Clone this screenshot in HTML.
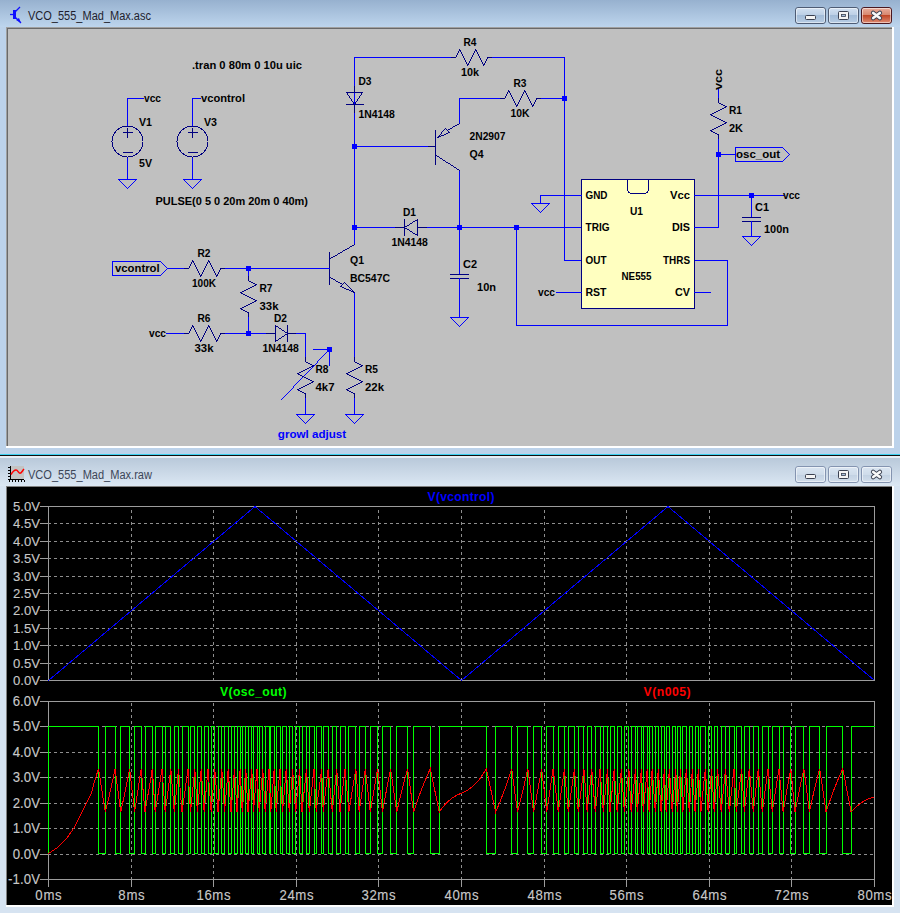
<!DOCTYPE html><html><head><meta charset="utf-8"><style>html,body{margin:0;padding:0;width:900px;height:913px;overflow:hidden;background:#bcd2ea;font-family:"Liberation Sans",sans-serif}</style></head><body><svg width="900" height="913" viewBox="0 0 900 913" style="position:absolute;left:0;top:0" font-family="Liberation Sans, sans-serif">
<defs>
<linearGradient id="tb1" x1="0" y1="0" x2="0" y2="1"><stop offset="0" stop-color="#97b1cf"/><stop offset="1" stop-color="#bdd5ed"/></linearGradient>
<linearGradient id="tb2" x1="0" y1="0" x2="0" y2="1"><stop offset="0" stop-color="#b9c9da"/><stop offset="1" stop-color="#dbe7f3"/></linearGradient>
<linearGradient id="btn1" x1="0" y1="0" x2="0" y2="1"><stop offset="0" stop-color="#d4e2f2"/><stop offset="0.45" stop-color="#bdd0e6"/><stop offset="0.5" stop-color="#a3bcd8"/><stop offset="1" stop-color="#b8cde4"/></linearGradient>
<linearGradient id="btnc" x1="0" y1="0" x2="0" y2="1"><stop offset="0" stop-color="#eab0a0"/><stop offset="0.45" stop-color="#d88870"/><stop offset="0.5" stop-color="#c04828"/><stop offset="1" stop-color="#e09078"/></linearGradient>
<linearGradient id="btn2" x1="0" y1="0" x2="0" y2="1"><stop offset="0" stop-color="#dbe6f2"/><stop offset="0.5" stop-color="#cfdcea"/><stop offset="0.55" stop-color="#c3d2e3"/><stop offset="1" stop-color="#d3dfec"/></linearGradient>
</defs>
<rect x="0" y="0" width="900" height="456" fill="#bcd2ea"/>
<rect x="0" y="0" width="900" height="27" fill="url(#tb1)"/>
<rect x="6" y="27" width="888" height="421" fill="#ffffff"/>
<rect x="6" y="27" width="886" height="419" fill="#a0a0a0"/>
<rect x="7" y="28" width="885" height="418" fill="#696969"/>
<rect x="8" y="29" width="884" height="417" fill="#c0c0c0"/>
<rect x="0" y="454" width="900" height="1" fill="#3cd0f0"/>
<rect x="0" y="455" width="900" height="1" fill="#101010"/>
<rect x="0" y="456" width="900" height="457" fill="#d6e3f1"/>
<rect x="0" y="456" width="900" height="2" fill="#e8eef6"/>
<rect x="0" y="458" width="900" height="28" fill="url(#tb2)"/>
<rect x="6" y="486" width="888" height="421" fill="#ffffff"/>
<rect x="6" y="486" width="886" height="419" fill="#808080"/>
<rect x="7" y="487" width="885" height="418" fill="#000000"/>
<g stroke="#1010ff" fill="none" stroke-width="1.3"><line x1="10" y1="14.5" x2="14" y2="14.5"/><line x1="20" y1="7" x2="15" y2="12"/><line x1="15" y1="17" x2="21" y2="23"/></g>
<rect x="13" y="10" width="3" height="9" fill="#1010ff"/>
<polygon points="21,23 16,20 19,18" fill="#1010ff"/>
<text x="28" y="20" font-size="12.5" font-weight="normal" fill="#1e1e2e" text-anchor="start" textLength="123" lengthAdjust="spacingAndGlyphs" >VCO_555_Mad_Max.asc</text>
<rect x="11" y="466" width="13" height="13" fill="#c4c4c4"/>
<g shape-rendering="crispEdges"><rect x="10" y="466" width="1" height="14" fill="#000"/><rect x="9" y="479" width="15" height="1" fill="#000"/><rect x="8" y="467" width="2" height="1" fill="#000"/><rect x="8" y="470" width="2" height="1" fill="#000"/><rect x="8" y="473" width="2" height="1" fill="#000"/><rect x="8" y="476" width="2" height="1" fill="#000"/><rect x="8" y="479" width="2" height="1" fill="#000"/><rect x="9" y="480" width="1" height="2" fill="#000"/><rect x="12" y="480" width="1" height="2" fill="#000"/><rect x="15" y="480" width="1" height="2" fill="#000"/><rect x="18" y="480" width="1" height="2" fill="#000"/><rect x="21" y="480" width="1" height="2" fill="#000"/><rect x="24" y="480" width="1" height="2" fill="#000"/></g>
<path d="M11 474.5 C12.5 472 14 470 16 470 C18 470 18.5 473.3 20 473.3 C21.5 473.3 22.5 470.5 24 469" stroke="#ff0000" fill="none" stroke-width="1.5"/>
<text x="28" y="479" font-size="12.5" font-weight="normal" fill="#3c4658" text-anchor="start" textLength="124" lengthAdjust="spacingAndGlyphs" >VCO_555_Mad_Max.raw</text>
<rect x="795.5" y="7.5" width="30" height="16" rx="2.5" fill="url(#btn1)" stroke="#4e5c74"/>
<rect x="796.5" y="8.5" width="28" height="14" rx="1.5" fill="none" stroke="rgba(255,255,255,0.5)"/>
<rect x="805.5" y="15.5" width="10" height="4" rx="1" fill="#f4f4f4" stroke="#3a4050"/>
<rect x="828.5" y="7.5" width="30" height="16" rx="2.5" fill="url(#btn1)" stroke="#4e5c74"/>
<rect x="829.5" y="8.5" width="28" height="14" rx="1.5" fill="none" stroke="rgba(255,255,255,0.5)"/>
<rect x="838.5" y="11.5" width="10" height="8" rx="1" fill="#f4f4f4" stroke="#3a4050"/><rect x="841.5" y="14.5" width="4" height="2" fill="#a8c0dc" stroke="#3a4050" stroke-width="0.8"/>
<rect x="861.5" y="7.5" width="30" height="16" rx="2.5" fill="url(#btnc)" stroke="#4a1820"/>
<rect x="862.5" y="8.5" width="28" height="14" rx="1.5" fill="none" stroke="rgba(255,255,255,0.5)"/>
<path d="M873.2 13.0 L879.8 18.0 M879.8 13.0 L873.2 18.0" stroke="#3a4050" stroke-width="4.6" stroke-linecap="round"/><path d="M873.2 13.0 L879.8 18.0 M879.8 13.0 L873.2 18.0" stroke="#f8f8f8" stroke-width="2.8" stroke-linecap="round"/>
<rect x="795.5" y="466.5" width="30" height="16" rx="2.5" fill="url(#btn2)" stroke="#8494b0"/>
<rect x="796.5" y="467.5" width="28" height="14" rx="1.5" fill="none" stroke="rgba(255,255,255,0.5)"/>
<rect x="805.5" y="474.5" width="10" height="4" rx="1" fill="#f4f4f4" stroke="#3a4050"/>
<rect x="828.5" y="466.5" width="30" height="16" rx="2.5" fill="url(#btn2)" stroke="#8494b0"/>
<rect x="829.5" y="467.5" width="28" height="14" rx="1.5" fill="none" stroke="rgba(255,255,255,0.5)"/>
<rect x="838.5" y="470.5" width="10" height="8" rx="1" fill="#f4f4f4" stroke="#3a4050"/><rect x="841.5" y="473.5" width="4" height="2" fill="#a8c0dc" stroke="#3a4050" stroke-width="0.8"/>
<rect x="861.5" y="466.5" width="30" height="16" rx="2.5" fill="url(#btn2)" stroke="#8494b0"/>
<rect x="862.5" y="467.5" width="28" height="14" rx="1.5" fill="none" stroke="rgba(255,255,255,0.5)"/>
<path d="M873.2 472.0 L879.8 477.0 M879.8 472.0 L873.2 477.0" stroke="#3a4050" stroke-width="4.6" stroke-linecap="round"/><path d="M873.2 472.0 L879.8 477.0 M879.8 472.0 L873.2 477.0" stroke="#f8f8f8" stroke-width="2.8" stroke-linecap="round"/>
<g font-family="Liberation Sans, sans-serif" shape-rendering="crispEdges" stroke-linecap="square">
<polyline points="143.50,98.50 127.50,98.50 127.50,126.50" fill="none" stroke="#0000ff" shape-rendering="crispEdges"/>
<polyline points="127.50,157.50 127.50,179.50" fill="none" stroke="#0000ff" shape-rendering="crispEdges"/>
<circle cx="127.5" cy="141.5" r="15.5" fill="none" stroke="#000080"/>
<line x1="123" y1="132.5" x2="132" y2="132.5" stroke="#000080" />
<line x1="127.5" y1="128" x2="127.5" y2="137" stroke="#000080" />
<line x1="123" y1="152.5" x2="132" y2="152.5" stroke="#000080" />
<text x="144" y="102" font-size="11" font-weight="bold" fill="#000" text-anchor="start" textLength="17" lengthAdjust="spacingAndGlyphs" >vcc</text>
<text x="139" y="126" font-size="11" font-weight="bold" fill="#000" text-anchor="start" textLength="13" lengthAdjust="spacingAndGlyphs" >V1</text>
<text x="139" y="167" font-size="11" font-weight="bold" fill="#000" text-anchor="start" textLength="13" lengthAdjust="spacingAndGlyphs" >5V</text>
<polyline points="200.50,98.50 192.50,98.50 192.50,126.50" fill="none" stroke="#0000ff" shape-rendering="crispEdges"/>
<polyline points="192.50,157.50 192.50,179.50" fill="none" stroke="#0000ff" shape-rendering="crispEdges"/>
<circle cx="192.5" cy="141.5" r="15.5" fill="none" stroke="#000080"/>
<line x1="188" y1="132.5" x2="197" y2="132.5" stroke="#000080" />
<line x1="192.5" y1="128" x2="192.5" y2="137" stroke="#000080" />
<line x1="188" y1="152.5" x2="197" y2="152.5" stroke="#000080" />
<text x="201" y="102" font-size="11" font-weight="bold" fill="#000" text-anchor="start" textLength="44" lengthAdjust="spacingAndGlyphs" >vcontrol</text>
<text x="204" y="126" font-size="11" font-weight="bold" fill="#000" text-anchor="start" textLength="13" lengthAdjust="spacingAndGlyphs" >V3</text>
<text x="155.5" y="205" font-size="11" font-weight="bold" fill="#000" text-anchor="start" textLength="152.5" lengthAdjust="spacingAndGlyphs" >PULSE(0 5 0 20m 20m 0 40m)</text>
<text x="192" y="69" font-size="11" font-weight="bold" fill="#000" text-anchor="start" textLength="110" lengthAdjust="spacingAndGlyphs" >.tran 0 80m 0 10u uic</text>
<polyline points="354.50,227.50 354.50,57.50 451.50,57.50" fill="none" stroke="#0000ff" shape-rendering="crispEdges"/>
<polyline points="491.50,57.50 564.50,57.50 564.50,260.50 581.50,260.50" fill="none" stroke="#0000ff" shape-rendering="crispEdges"/>
<text x="470" y="46" font-size="11" font-weight="bold" fill="#000" text-anchor="middle" textLength="13" lengthAdjust="spacingAndGlyphs" >R4</text>
<text x="470" y="76" font-size="11" font-weight="bold" fill="#000" text-anchor="middle" textLength="18" lengthAdjust="spacingAndGlyphs" >10k</text>
<line x1="346" y1="104.5" x2="363" y2="104.5" stroke="#000080" />
<line x1="354.5" y1="86" x2="354.5" y2="92" stroke="#000080" />
<line x1="354.5" y1="104.5" x2="354.5" y2="112" stroke="#000080" />
<text x="358.5" y="85" font-size="11" font-weight="bold" fill="#000" text-anchor="start" textLength="13" lengthAdjust="spacingAndGlyphs" >D3</text>
<text x="358.5" y="118" font-size="11" font-weight="bold" fill="#000" text-anchor="start" textLength="36.4" lengthAdjust="spacingAndGlyphs" >1N4148</text>
<rect x="352" y="144" width="5" height="5" fill="#0000ff"/>
<polyline points="354.50,146.50 428.50,146.50" fill="none" stroke="#0000ff" shape-rendering="crispEdges"/>
<line x1="428" y1="146.5" x2="435" y2="146.5" stroke="#000080" />
<line x1="435.5" y1="130" x2="435.5" y2="164" stroke="#000080" />
<polyline points="459.50,122.50 459.50,98.50 500.50,98.50" fill="none" stroke="#0000ff" shape-rendering="crispEdges"/>
<polyline points="540.50,98.50 564.50,98.50" fill="none" stroke="#0000ff" shape-rendering="crispEdges"/>
<rect x="562" y="96" width="5" height="5" fill="#0000ff"/>
<text x="520" y="87" font-size="11" font-weight="bold" fill="#000" text-anchor="middle" textLength="13" lengthAdjust="spacingAndGlyphs" >R3</text>
<text x="520" y="117" font-size="11" font-weight="bold" fill="#000" text-anchor="middle" textLength="19" lengthAdjust="spacingAndGlyphs" >10K</text>
<text x="469.5" y="140" font-size="11" font-weight="bold" fill="#000" text-anchor="start" textLength="36" lengthAdjust="spacingAndGlyphs" >2N2907</text>
<text x="469.5" y="158" font-size="11" font-weight="bold" fill="#000" text-anchor="start" textLength="14" lengthAdjust="spacingAndGlyphs" >Q4</text>
<polyline points="459.50,171.50 459.50,227.50 459.50,274.50" fill="none" stroke="#0000ff" shape-rendering="crispEdges"/>
<line x1="450.5" y1="274.5" x2="468.5" y2="274.5" stroke="#000080" />
<line x1="450.5" y1="278.5" x2="468.5" y2="278.5" stroke="#000080" />
<polyline points="459.50,278.50 459.50,317.50" fill="none" stroke="#0000ff" shape-rendering="crispEdges"/>
<text x="463" y="268" font-size="11" font-weight="bold" fill="#000" text-anchor="start" textLength="14" lengthAdjust="spacingAndGlyphs" >C2</text>
<text x="477" y="291" font-size="11" font-weight="bold" fill="#000" text-anchor="start" textLength="19" lengthAdjust="spacingAndGlyphs" >10n</text>
<rect x="457" y="225" width="5" height="5" fill="#0000ff"/>
<polyline points="354.50,227.50 395.50,227.50" fill="none" stroke="#0000ff" shape-rendering="crispEdges"/>
<line x1="395" y1="227.5" x2="404" y2="227.5" stroke="#000080" />
<line x1="418" y1="227.5" x2="427" y2="227.5" stroke="#000080" />
<line x1="404.5" y1="219" x2="404.5" y2="235" stroke="#000080" />
<polyline points="427.50,227.50 581.50,227.50" fill="none" stroke="#0000ff" shape-rendering="crispEdges"/>
<text x="403" y="215.5" font-size="11" font-weight="bold" fill="#000" text-anchor="start" textLength="13" lengthAdjust="spacingAndGlyphs" >D1</text>
<text x="391.5" y="246" font-size="11" font-weight="bold" fill="#000" text-anchor="start" textLength="36.4" lengthAdjust="spacingAndGlyphs" >1N4148</text>
<rect x="352" y="225" width="5" height="5" fill="#0000ff"/>
<rect x="514" y="225" width="5" height="5" fill="#0000ff"/>
<polyline points="516.50,227.50 516.50,325.50 727.50,325.50 727.50,260.50 694.50,260.50" fill="none" stroke="#0000ff" shape-rendering="crispEdges"/>
<polyline points="354.50,227.50 354.50,244.50" fill="none" stroke="#0000ff" shape-rendering="crispEdges"/>
<line x1="329.5" y1="252" x2="329.5" y2="284" stroke="#000080" />
<text x="350" y="264" font-size="11" font-weight="bold" fill="#000" text-anchor="start" textLength="14" lengthAdjust="spacingAndGlyphs" >Q1</text>
<text x="350" y="282" font-size="11" font-weight="bold" fill="#000" text-anchor="start" textLength="40" lengthAdjust="spacingAndGlyphs" >BC547C</text>
<polyline points="354.50,292.50 354.50,357.50" fill="none" stroke="#0000ff" shape-rendering="crispEdges"/>
<polyline points="354.50,397.50 354.50,414.50" fill="none" stroke="#0000ff" shape-rendering="crispEdges"/>
<text x="365" y="373" font-size="11" font-weight="bold" fill="#000" text-anchor="start" textLength="13" lengthAdjust="spacingAndGlyphs" >R5</text>
<text x="365" y="391" font-size="11" font-weight="bold" fill="#000" text-anchor="start" textLength="19" lengthAdjust="spacingAndGlyphs" >22k</text>
<text x="115" y="272" font-size="11" font-weight="bold" fill="#000" text-anchor="start" textLength="44.7" lengthAdjust="spacingAndGlyphs" >vcontrol</text>
<polyline points="167.50,268.50 184.50,268.50" fill="none" stroke="#0000ff" shape-rendering="crispEdges"/>
<polyline points="224.50,268.50 329.50,268.50" fill="none" stroke="#0000ff" shape-rendering="crispEdges"/>
<rect x="246" y="266" width="5" height="5" fill="#0000ff"/>
<text x="204" y="257" font-size="11" font-weight="bold" fill="#000" text-anchor="middle" textLength="13" lengthAdjust="spacingAndGlyphs" >R2</text>
<text x="204" y="287" font-size="11" font-weight="bold" fill="#000" text-anchor="middle" textLength="24" lengthAdjust="spacingAndGlyphs" >100K</text>
<polyline points="248.50,268.50 248.50,276.50" fill="none" stroke="#0000ff" shape-rendering="crispEdges"/>
<polyline points="248.50,316.50 248.50,333.50" fill="none" stroke="#0000ff" shape-rendering="crispEdges"/>
<rect x="246" y="331" width="5" height="5" fill="#0000ff"/>
<text x="259.5" y="292" font-size="11" font-weight="bold" fill="#000" text-anchor="start" textLength="13" lengthAdjust="spacingAndGlyphs" >R7</text>
<text x="259.5" y="310" font-size="11" font-weight="bold" fill="#000" text-anchor="start" textLength="19" lengthAdjust="spacingAndGlyphs" >33k</text>
<text x="149" y="337" font-size="11" font-weight="bold" fill="#000" text-anchor="start" textLength="17" lengthAdjust="spacingAndGlyphs" >vcc</text>
<polyline points="166.50,333.50 184.50,333.50" fill="none" stroke="#0000ff" shape-rendering="crispEdges"/>
<polyline points="224.50,333.50 266.50,333.50" fill="none" stroke="#0000ff" shape-rendering="crispEdges"/>
<text x="204" y="322" font-size="11" font-weight="bold" fill="#000" text-anchor="middle" textLength="13" lengthAdjust="spacingAndGlyphs" >R6</text>
<text x="204" y="352" font-size="11" font-weight="bold" fill="#000" text-anchor="middle" textLength="19" lengthAdjust="spacingAndGlyphs" >33k</text>
<line x1="266" y1="333.5" x2="275" y2="333.5" stroke="#000080" />
<line x1="288" y1="333.5" x2="296" y2="333.5" stroke="#000080" />
<line x1="287.5" y1="325" x2="287.5" y2="341" stroke="#000080" />
<polyline points="296.50,333.50 305.50,333.50 305.50,357.50" fill="none" stroke="#0000ff" shape-rendering="crispEdges"/>
<text x="274" y="322" font-size="11" font-weight="bold" fill="#000" text-anchor="start" textLength="13" lengthAdjust="spacingAndGlyphs" >D2</text>
<text x="262.5" y="352" font-size="11" font-weight="bold" fill="#000" text-anchor="start" textLength="36.4" lengthAdjust="spacingAndGlyphs" >1N4148</text>
<polyline points="305.50,397.50 305.50,414.50" fill="none" stroke="#0000ff" shape-rendering="crispEdges"/>
<polyline points="313.50,349.50 329.50,349.50 329.50,365.50" fill="none" stroke="#0000ff" shape-rendering="crispEdges"/>
<rect x="327" y="347" width="5" height="5" fill="#0000ff"/>
<text x="315.5" y="373" font-size="11" font-weight="bold" fill="#000" text-anchor="start" textLength="13" lengthAdjust="spacingAndGlyphs" >R8</text>
<text x="315.5" y="391" font-size="11" font-weight="bold" fill="#000" text-anchor="start" textLength="19" lengthAdjust="spacingAndGlyphs" >4k7</text>
<text x="277.8" y="438" font-size="11" font-weight="bold" fill="#0000ff" text-anchor="start" textLength="68.4" lengthAdjust="spacingAndGlyphs" >growl adjust</text>
<rect x="581.5" y="179.5" width="113" height="129" fill="#ffffc0" stroke="#000080"/>
<path d="M627.5 179.5 V188.5 Q627.5 193.5 632.5 193.5 H643.5 Q648.5 193.5 648.5 188.5 V179.5" fill="none" stroke="#000080"/>
<text x="585.5" y="199" font-size="11" font-weight="bold" fill="#000" text-anchor="start" textLength="22" lengthAdjust="spacingAndGlyphs" >GND</text>
<text x="585.5" y="231" font-size="11" font-weight="bold" fill="#000" text-anchor="start" textLength="24" lengthAdjust="spacingAndGlyphs" >TRIG</text>
<text x="585.5" y="264" font-size="11" font-weight="bold" fill="#000" text-anchor="start" textLength="21" lengthAdjust="spacingAndGlyphs" >OUT</text>
<text x="585.5" y="296" font-size="11" font-weight="bold" fill="#000" text-anchor="start" textLength="21" lengthAdjust="spacingAndGlyphs" >RST</text>
<text x="690" y="199" font-size="11" font-weight="bold" fill="#000" text-anchor="end" textLength="20" lengthAdjust="spacingAndGlyphs" >Vcc</text>
<text x="690" y="231" font-size="11" font-weight="bold" fill="#000" text-anchor="end" textLength="18" lengthAdjust="spacingAndGlyphs" >DIS</text>
<text x="690" y="264" font-size="11" font-weight="bold" fill="#000" text-anchor="end" textLength="27" lengthAdjust="spacingAndGlyphs" >THRS</text>
<text x="690" y="296" font-size="11" font-weight="bold" fill="#000" text-anchor="end" textLength="15" lengthAdjust="spacingAndGlyphs" >CV</text>
<text x="636.5" y="215" font-size="11" font-weight="bold" fill="#000" text-anchor="middle" textLength="13" lengthAdjust="spacingAndGlyphs" >U1</text>
<text x="636.5" y="280" font-size="11" font-weight="bold" fill="#000" text-anchor="middle" textLength="30" lengthAdjust="spacingAndGlyphs" >NE555</text>
<polyline points="581.50,195.50 540.50,195.50 540.50,203.50" fill="none" stroke="#0000ff" shape-rendering="crispEdges"/>
<text x="538" y="296" font-size="11" font-weight="bold" fill="#000" text-anchor="start" textLength="17" lengthAdjust="spacingAndGlyphs" >vcc</text>
<polyline points="556.50,292.50 581.50,292.50" fill="none" stroke="#0000ff" shape-rendering="crispEdges"/>
<polyline points="694.50,292.50 710.50,292.50" fill="none" stroke="#0000ff" shape-rendering="crispEdges"/>
<polyline points="694.50,195.50 783.50,195.50" fill="none" stroke="#0000ff" shape-rendering="crispEdges"/>
<rect x="749" y="193" width="5" height="5" fill="#0000ff"/>
<text x="783" y="199" font-size="11" font-weight="bold" fill="#000" text-anchor="start" textLength="17" lengthAdjust="spacingAndGlyphs" >vcc</text>
<polyline points="751.50,195.50 751.50,217.50" fill="none" stroke="#0000ff" shape-rendering="crispEdges"/>
<line x1="742.5" y1="217.5" x2="760.5" y2="217.5" stroke="#000080" />
<line x1="742.5" y1="221.5" x2="760.5" y2="221.5" stroke="#000080" />
<polyline points="751.50,221.50 751.50,236.50" fill="none" stroke="#0000ff" shape-rendering="crispEdges"/>
<text x="755" y="211" font-size="11" font-weight="bold" fill="#000" text-anchor="start" textLength="14" lengthAdjust="spacingAndGlyphs" >C1</text>
<text x="764" y="233" font-size="11" font-weight="bold" fill="#000" text-anchor="start" textLength="25" lengthAdjust="spacingAndGlyphs" >100n</text>
<polyline points="694.50,227.50 718.50,227.50 718.50,138.50" fill="none" stroke="#0000ff" shape-rendering="crispEdges"/>
<polyline points="718.50,98.50 718.50,89.50" fill="none" stroke="#0000ff" shape-rendering="crispEdges"/>
<text transform="translate(722,90) rotate(-90)" font-size="11" font-weight="bold" textLength="21" lengthAdjust="spacingAndGlyphs">vcc</text>
<rect x="716" y="152" width="5" height="5" fill="#0000ff"/>
<text x="729" y="114" font-size="11" font-weight="bold" fill="#000" text-anchor="start" textLength="13" lengthAdjust="spacingAndGlyphs" >R1</text>
<text x="729" y="132" font-size="11" font-weight="bold" fill="#000" text-anchor="start" textLength="14" lengthAdjust="spacingAndGlyphs" >2K</text>
<polyline points="718.50,154.50 735.50,154.50" fill="none" stroke="#0000ff" shape-rendering="crispEdges"/>
<text x="736" y="158" font-size="11" font-weight="bold" fill="#000" text-anchor="start" textLength="44" lengthAdjust="spacingAndGlyphs" >osc_out</text>
<path d="M735 147h48v1h-48zM735 148h1v1h-1zM783 148h1v1h-1zM735 149h1v1h-1zM784 149h1v1h-1zM735 150h1v1h-1zM785 150h1v1h-1zM735 151h1v1h-1zM786 151h1v1h-1zM735 152h1v1h-1zM787 152h1v1h-1zM735 153h1v1h-1zM788 153h1v1h-1zM735 154h1v1h-1zM789 154h1v1h-1zM735 155h1v1h-1zM788 155h1v1h-1zM735 156h1v1h-1zM787 156h1v1h-1zM735 157h1v1h-1zM786 157h1v1h-1zM735 158h1v1h-1zM785 158h1v1h-1zM735 159h1v1h-1zM784 159h1v1h-1zM735 160h1v1h-1zM783 160h1v1h-1zM735 161h48v1h-48zM118 179h19v1h-19zM183 179h19v1h-19zM119 180h1v1h-1zM135 180h1v1h-1zM184 180h1v1h-1zM200 180h1v1h-1zM120 181h1v1h-1zM134 181h1v1h-1zM185 181h1v1h-1zM199 181h1v1h-1zM121 182h1v1h-1zM133 182h1v1h-1zM186 182h1v1h-1zM198 182h1v1h-1zM122 183h1v1h-1zM132 183h1v1h-1zM187 183h1v1h-1zM197 183h1v1h-1zM123 184h1v1h-1zM131 184h1v1h-1zM188 184h1v1h-1zM196 184h1v1h-1zM124 185h1v1h-1zM130 185h1v1h-1zM189 185h1v1h-1zM195 185h1v1h-1zM125 186h1v1h-1zM129 186h1v1h-1zM190 186h1v1h-1zM194 186h1v1h-1zM126 187h1v1h-1zM128 187h1v1h-1zM191 187h1v1h-1zM193 187h1v1h-1zM127 188h1v1h-1zM192 188h1v1h-1zM531 203h19v1h-19zM532 204h1v1h-1zM548 204h1v1h-1zM533 205h1v1h-1zM547 205h1v1h-1zM534 206h1v1h-1zM546 206h1v1h-1zM535 207h1v1h-1zM545 207h1v1h-1zM536 208h1v1h-1zM544 208h1v1h-1zM537 209h1v1h-1zM543 209h1v1h-1zM538 210h1v1h-1zM542 210h1v1h-1zM539 211h1v1h-1zM541 211h1v1h-1zM540 212h1v1h-1zM742 236h19v1h-19zM743 237h1v1h-1zM759 237h1v1h-1zM744 238h1v1h-1zM758 238h1v1h-1zM745 239h1v1h-1zM757 239h1v1h-1zM746 240h1v1h-1zM756 240h1v1h-1zM747 241h1v1h-1zM755 241h1v1h-1zM748 242h1v1h-1zM754 242h1v1h-1zM749 243h1v1h-1zM753 243h1v1h-1zM750 244h1v1h-1zM752 244h1v1h-1zM751 245h1v1h-1zM112 261h49v1h-49zM112 262h1v1h-1zM161 262h1v1h-1zM112 263h1v1h-1zM162 263h1v1h-1zM112 264h1v1h-1zM163 264h1v1h-1zM112 265h1v1h-1zM164 265h1v1h-1zM112 266h1v1h-1zM165 266h1v1h-1zM112 267h1v1h-1zM166 267h1v1h-1zM112 268h1v1h-1zM167 268h1v1h-1zM112 269h1v1h-1zM166 269h1v1h-1zM112 270h1v1h-1zM165 270h1v1h-1zM112 271h1v1h-1zM164 271h1v1h-1zM112 272h1v1h-1zM163 272h1v1h-1zM112 273h1v1h-1zM162 273h1v1h-1zM112 274h1v1h-1zM161 274h1v1h-1zM112 275h49v1h-49zM450 317h19v1h-19zM451 318h1v1h-1zM467 318h1v1h-1zM452 319h1v1h-1zM466 319h1v1h-1zM453 320h1v1h-1zM465 320h1v1h-1zM454 321h1v1h-1zM464 321h1v1h-1zM455 322h1v1h-1zM463 322h1v1h-1zM456 323h1v1h-1zM462 323h1v1h-1zM457 324h1v1h-1zM461 324h1v1h-1zM458 325h1v1h-1zM460 325h1v1h-1zM459 326h1v1h-1zM329 349h1v1h-1zM328 350h1v1h-1zM327 351h1v1h-1zM326 352h1v1h-1zM325 353h1v1h-1zM324 354h1v1h-1zM323 355h1v1h-1zM322 356h1v1h-1zM321 357h1v1h-1zM320 358h1v1h-1zM319 359h1v1h-1zM318 360h1v1h-1zM317 361h1v1h-1zM317 362h1v1h-1zM316 363h1v1h-1zM315 364h1v1h-1zM314 365h1v1h-1zM313 366h1v1h-1zM312 367h1v1h-1zM311 368h1v1h-1zM310 369h1v1h-1zM309 370h1v1h-1zM308 371h1v1h-1zM307 372h1v1h-1zM306 373h1v1h-1zM305 374h1v1h-1zM304 375h1v1h-1zM303 376h1v1h-1zM302 377h1v1h-1zM301 378h1v1h-1zM300 379h1v1h-1zM299 380h1v1h-1zM298 381h1v1h-1zM297 382h1v1h-1zM296 383h1v1h-1zM295 384h1v1h-1zM294 385h1v1h-1zM293 386h1v1h-1zM293 387h1v1h-1zM292 388h1v1h-1zM291 389h1v1h-1zM290 390h1v1h-1zM289 391h1v1h-1zM288 392h1v1h-1zM287 393h1v1h-1zM286 394h1v1h-1zM285 395h1v1h-1zM284 396h1v1h-1zM283 397h1v1h-1zM282 398h1v1h-1zM281 399h1v1h-1zM296 414h19v1h-19zM345 414h19v1h-19zM297 415h1v1h-1zM313 415h1v1h-1zM346 415h1v1h-1zM362 415h1v1h-1zM298 416h1v1h-1zM312 416h1v1h-1zM347 416h1v1h-1zM361 416h1v1h-1zM299 417h1v1h-1zM311 417h1v1h-1zM348 417h1v1h-1zM360 417h1v1h-1zM300 418h1v1h-1zM310 418h1v1h-1zM349 418h1v1h-1zM359 418h1v1h-1zM301 419h1v1h-1zM309 419h1v1h-1zM350 419h1v1h-1zM358 419h1v1h-1zM302 420h1v1h-1zM308 420h1v1h-1zM351 420h1v1h-1zM357 420h1v1h-1zM303 421h1v1h-1zM307 421h1v1h-1zM352 421h1v1h-1zM356 421h1v1h-1zM304 422h1v1h-1zM306 422h1v1h-1zM353 422h1v1h-1zM355 422h1v1h-1zM305 423h1v1h-1zM354 423h1v1h-1z" fill="#0000ff" shape-rendering="crispEdges"/>
<path d="M459 49h1v1h-1zM475 49h1v1h-1zM459 50h2v1h-2zM475 50h2v1h-2zM458 51h1v1h-1zM460 51h1v1h-1zM474 51h1v1h-1zM476 51h1v1h-1zM458 52h1v1h-1zM461 52h1v1h-1zM474 52h1v1h-1zM477 52h1v1h-1zM457 53h1v1h-1zM461 53h1v1h-1zM473 53h1v1h-1zM477 53h1v1h-1zM457 54h1v1h-1zM462 54h1v1h-1zM473 54h1v1h-1zM478 54h1v1h-1zM456 55h1v1h-1zM462 55h1v1h-1zM472 55h1v1h-1zM478 55h1v1h-1zM456 56h1v1h-1zM463 56h1v1h-1zM472 56h1v1h-1zM479 56h1v1h-1zM451 57h5v1h-5zM463 57h1v1h-1zM471 57h1v1h-1zM479 57h1v1h-1zM487 57h5v1h-5zM464 58h1v1h-1zM471 58h1v1h-1zM480 58h1v1h-1zM487 58h1v1h-1zM464 59h1v1h-1zM470 59h1v1h-1zM480 59h1v1h-1zM486 59h1v1h-1zM465 60h1v1h-1zM470 60h1v1h-1zM481 60h1v1h-1zM486 60h1v1h-1zM465 61h1v1h-1zM469 61h1v1h-1zM481 61h1v1h-1zM485 61h1v1h-1zM466 62h1v1h-1zM469 62h1v1h-1zM482 62h1v1h-1zM485 62h1v1h-1zM466 63h1v1h-1zM468 63h1v1h-1zM482 63h1v1h-1zM484 63h1v1h-1zM467 64h2v1h-2zM483 64h2v1h-2zM467 65h1v1h-1zM483 65h1v1h-1zM508 90h1v1h-1zM524 90h1v1h-1zM508 91h2v1h-2zM524 91h2v1h-2zM346 92h17v1h-17zM507 92h1v1h-1zM509 92h1v1h-1zM523 92h1v1h-1zM525 92h1v1h-1zM347 93h1v1h-1zM361 93h1v1h-1zM507 93h1v1h-1zM510 93h1v1h-1zM523 93h1v1h-1zM526 93h1v1h-1zM347 94h1v1h-1zM361 94h1v1h-1zM506 94h1v1h-1zM510 94h1v1h-1zM522 94h1v1h-1zM526 94h1v1h-1zM348 95h1v1h-1zM360 95h1v1h-1zM506 95h1v1h-1zM511 95h1v1h-1zM522 95h1v1h-1zM527 95h1v1h-1zM349 96h1v1h-1zM359 96h1v1h-1zM505 96h1v1h-1zM511 96h1v1h-1zM521 96h1v1h-1zM527 96h1v1h-1zM349 97h1v1h-1zM359 97h1v1h-1zM505 97h1v1h-1zM512 97h1v1h-1zM521 97h1v1h-1zM528 97h1v1h-1zM350 98h1v1h-1zM358 98h1v1h-1zM500 98h5v1h-5zM512 98h1v1h-1zM520 98h1v1h-1zM528 98h1v1h-1zM536 98h5v1h-5zM718 98h1v1h-1zM351 99h1v1h-1zM357 99h1v1h-1zM513 99h1v1h-1zM520 99h1v1h-1zM529 99h1v1h-1zM536 99h1v1h-1zM718 99h1v1h-1zM351 100h1v1h-1zM357 100h1v1h-1zM513 100h1v1h-1zM519 100h1v1h-1zM529 100h1v1h-1zM535 100h1v1h-1zM718 100h1v1h-1zM352 101h1v1h-1zM356 101h1v1h-1zM514 101h1v1h-1zM519 101h1v1h-1zM530 101h1v1h-1zM535 101h1v1h-1zM718 101h1v1h-1zM353 102h1v1h-1zM355 102h1v1h-1zM514 102h1v1h-1zM518 102h1v1h-1zM530 102h1v1h-1zM534 102h1v1h-1zM718 102h1v1h-1zM353 103h1v1h-1zM355 103h1v1h-1zM515 103h1v1h-1zM518 103h1v1h-1zM531 103h1v1h-1zM534 103h1v1h-1zM719 103h2v1h-2zM354 104h1v1h-1zM515 104h1v1h-1zM517 104h1v1h-1zM531 104h1v1h-1zM533 104h1v1h-1zM721 104h2v1h-2zM516 105h2v1h-2zM532 105h2v1h-2zM723 105h2v1h-2zM516 106h1v1h-1zM532 106h1v1h-1zM725 106h2v1h-2zM724 107h2v1h-2zM722 108h2v1h-2zM720 109h2v1h-2zM718 110h2v1h-2zM716 111h2v1h-2zM714 112h2v1h-2zM712 113h2v1h-2zM710 114h2v1h-2zM711 115h2v1h-2zM713 116h2v1h-2zM715 117h2v1h-2zM717 118h2v1h-2zM719 119h2v1h-2zM721 120h2v1h-2zM723 121h2v1h-2zM725 122h2v1h-2zM459 123h1v1h-1zM724 123h2v1h-2zM457 124h2v1h-2zM722 124h2v1h-2zM455 125h2v1h-2zM720 125h2v1h-2zM453 126h2v1h-2zM718 126h2v1h-2zM452 127h1v1h-1zM716 127h2v1h-2zM445 128h1v1h-1zM450 128h2v1h-2zM714 128h2v1h-2zM444 129h1v1h-1zM446 129h1v1h-1zM448 129h2v1h-2zM712 129h2v1h-2zM443 130h1v1h-1zM447 130h1v1h-1zM710 130h2v1h-2zM442 131h1v1h-1zM448 131h1v1h-1zM711 131h2v1h-2zM441 132h1v1h-1zM448 132h2v1h-2zM713 132h2v1h-2zM441 133h1v1h-1zM446 133h2v1h-2zM715 133h2v1h-2zM440 134h1v1h-1zM444 134h2v1h-2zM717 134h2v1h-2zM439 135h1v1h-1zM441 135h3v1h-3zM718 135h1v1h-1zM438 136h3v1h-3zM718 136h1v1h-1zM437 137h2v1h-2zM718 137h1v1h-1zM718 138h1v1h-1zM436 155h1v1h-1zM437 156h2v1h-2zM439 157h1v1h-1zM440 158h2v1h-2zM442 159h1v1h-1zM443 160h2v1h-2zM445 161h1v1h-1zM446 162h2v1h-2zM448 163h2v1h-2zM450 164h1v1h-1zM451 165h2v1h-2zM453 166h1v1h-1zM454 167h2v1h-2zM456 168h1v1h-1zM457 169h2v1h-2zM459 170h1v1h-1zM417 219h1v1h-1zM415 220h3v1h-3zM413 221h2v1h-2zM417 221h1v1h-1zM412 222h1v1h-1zM417 222h1v1h-1zM410 223h2v1h-2zM417 223h1v1h-1zM409 224h1v1h-1zM417 224h1v1h-1zM407 225h2v1h-2zM417 225h1v1h-1zM405 226h2v1h-2zM417 226h1v1h-1zM404 227h1v1h-1zM417 227h1v1h-1zM405 228h2v1h-2zM417 228h1v1h-1zM407 229h2v1h-2zM417 229h1v1h-1zM409 230h1v1h-1zM417 230h1v1h-1zM410 231h2v1h-2zM417 231h1v1h-1zM412 232h1v1h-1zM417 232h1v1h-1zM413 233h2v1h-2zM417 233h1v1h-1zM415 234h3v1h-3zM417 235h1v1h-1zM354 244h1v1h-1zM352 245h2v1h-2zM350 246h2v1h-2zM349 247h1v1h-1zM347 248h2v1h-2zM345 249h2v1h-2zM343 250h2v1h-2zM342 251h1v1h-1zM340 252h2v1h-2zM338 253h2v1h-2zM337 254h1v1h-1zM335 255h2v1h-2zM333 256h2v1h-2zM331 257h2v1h-2zM330 258h1v1h-1zM192 260h1v1h-1zM208 260h1v1h-1zM192 261h2v1h-2zM208 261h2v1h-2zM191 262h1v1h-1zM193 262h1v1h-1zM207 262h1v1h-1zM209 262h1v1h-1zM191 263h1v1h-1zM194 263h1v1h-1zM207 263h1v1h-1zM210 263h1v1h-1zM190 264h1v1h-1zM194 264h1v1h-1zM206 264h1v1h-1zM210 264h1v1h-1zM190 265h1v1h-1zM195 265h1v1h-1zM206 265h1v1h-1zM211 265h1v1h-1zM189 266h1v1h-1zM195 266h1v1h-1zM205 266h1v1h-1zM211 266h1v1h-1zM189 267h1v1h-1zM196 267h1v1h-1zM205 267h1v1h-1zM212 267h1v1h-1zM184 268h5v1h-5zM196 268h1v1h-1zM204 268h1v1h-1zM212 268h1v1h-1zM220 268h5v1h-5zM197 269h1v1h-1zM204 269h1v1h-1zM213 269h1v1h-1zM220 269h1v1h-1zM197 270h1v1h-1zM203 270h1v1h-1zM213 270h1v1h-1zM219 270h1v1h-1zM198 271h1v1h-1zM203 271h1v1h-1zM214 271h1v1h-1zM219 271h1v1h-1zM198 272h1v1h-1zM202 272h1v1h-1zM214 272h1v1h-1zM218 272h1v1h-1zM199 273h1v1h-1zM202 273h1v1h-1zM215 273h1v1h-1zM218 273h1v1h-1zM199 274h1v1h-1zM201 274h1v1h-1zM215 274h1v1h-1zM217 274h1v1h-1zM200 275h2v1h-2zM216 275h2v1h-2zM200 276h1v1h-1zM216 276h1v1h-1zM248 276h1v1h-1zM248 277h1v1h-1zM330 277h1v1h-1zM248 278h1v1h-1zM331 278h2v1h-2zM248 279h1v1h-1zM333 279h2v1h-2zM248 280h1v1h-1zM335 280h1v1h-1zM249 281h2v1h-2zM336 281h2v1h-2zM251 282h2v1h-2zM338 282h2v1h-2zM344 282h1v1h-1zM253 283h2v1h-2zM340 283h2v1h-2zM343 283h1v1h-1zM345 283h1v1h-1zM255 284h2v1h-2zM342 284h1v1h-1zM346 284h1v1h-1zM254 285h2v1h-2zM341 285h1v1h-1zM347 285h1v1h-1zM252 286h2v1h-2zM340 286h2v1h-2zM348 286h1v1h-1zM250 287h2v1h-2zM342 287h2v1h-2zM349 287h1v1h-1zM248 288h2v1h-2zM344 288h2v1h-2zM350 288h1v1h-1zM246 289h2v1h-2zM346 289h3v1h-3zM351 289h1v1h-1zM244 290h2v1h-2zM349 290h2v1h-2zM352 290h1v1h-1zM242 291h2v1h-2zM351 291h3v1h-3zM240 292h2v1h-2zM353 292h2v1h-2zM241 293h2v1h-2zM243 294h2v1h-2zM245 295h2v1h-2zM247 296h2v1h-2zM249 297h2v1h-2zM251 298h2v1h-2zM253 299h2v1h-2zM255 300h2v1h-2zM254 301h2v1h-2zM252 302h2v1h-2zM250 303h2v1h-2zM248 304h2v1h-2zM246 305h2v1h-2zM244 306h2v1h-2zM242 307h2v1h-2zM240 308h2v1h-2zM241 309h2v1h-2zM243 310h2v1h-2zM245 311h2v1h-2zM247 312h2v1h-2zM248 313h1v1h-1zM248 314h1v1h-1zM248 315h1v1h-1zM248 316h1v1h-1zM192 325h1v1h-1zM208 325h1v1h-1zM275 325h1v1h-1zM192 326h2v1h-2zM208 326h2v1h-2zM275 326h3v1h-3zM191 327h1v1h-1zM193 327h1v1h-1zM207 327h1v1h-1zM209 327h1v1h-1zM275 327h1v1h-1zM278 327h1v1h-1zM191 328h1v1h-1zM194 328h1v1h-1zM207 328h1v1h-1zM210 328h1v1h-1zM275 328h1v1h-1zM279 328h2v1h-2zM190 329h1v1h-1zM194 329h1v1h-1zM206 329h1v1h-1zM210 329h1v1h-1zM275 329h1v1h-1zM281 329h1v1h-1zM190 330h1v1h-1zM195 330h1v1h-1zM206 330h1v1h-1zM211 330h1v1h-1zM275 330h1v1h-1zM282 330h2v1h-2zM189 331h1v1h-1zM195 331h1v1h-1zM205 331h1v1h-1zM211 331h1v1h-1zM275 331h1v1h-1zM284 331h1v1h-1zM189 332h1v1h-1zM196 332h1v1h-1zM205 332h1v1h-1zM212 332h1v1h-1zM275 332h1v1h-1zM285 332h2v1h-2zM184 333h5v1h-5zM196 333h1v1h-1zM204 333h1v1h-1zM212 333h1v1h-1zM220 333h5v1h-5zM275 333h1v1h-1zM287 333h1v1h-1zM197 334h1v1h-1zM204 334h1v1h-1zM213 334h1v1h-1zM220 334h1v1h-1zM275 334h1v1h-1zM285 334h2v1h-2zM197 335h1v1h-1zM203 335h1v1h-1zM213 335h1v1h-1zM219 335h1v1h-1zM275 335h1v1h-1zM284 335h1v1h-1zM198 336h1v1h-1zM203 336h1v1h-1zM214 336h1v1h-1zM219 336h1v1h-1zM275 336h1v1h-1zM282 336h2v1h-2zM198 337h1v1h-1zM202 337h1v1h-1zM214 337h1v1h-1zM218 337h1v1h-1zM275 337h1v1h-1zM281 337h1v1h-1zM199 338h1v1h-1zM202 338h1v1h-1zM215 338h1v1h-1zM218 338h1v1h-1zM275 338h1v1h-1zM279 338h2v1h-2zM199 339h1v1h-1zM201 339h1v1h-1zM215 339h1v1h-1zM217 339h1v1h-1zM275 339h1v1h-1zM278 339h1v1h-1zM200 340h2v1h-2zM216 340h2v1h-2zM275 340h3v1h-3zM200 341h1v1h-1zM216 341h1v1h-1zM275 341h1v1h-1zM305 357h1v1h-1zM354 357h1v1h-1zM305 358h1v1h-1zM354 358h1v1h-1zM305 359h1v1h-1zM354 359h1v1h-1zM305 360h1v1h-1zM354 360h1v1h-1zM305 361h1v1h-1zM354 361h1v1h-1zM306 362h2v1h-2zM355 362h2v1h-2zM308 363h2v1h-2zM357 363h2v1h-2zM310 364h2v1h-2zM359 364h2v1h-2zM312 365h2v1h-2zM361 365h2v1h-2zM311 366h2v1h-2zM360 366h2v1h-2zM309 367h2v1h-2zM358 367h2v1h-2zM307 368h2v1h-2zM356 368h2v1h-2zM305 369h2v1h-2zM354 369h2v1h-2zM303 370h2v1h-2zM352 370h2v1h-2zM301 371h2v1h-2zM350 371h2v1h-2zM299 372h2v1h-2zM348 372h2v1h-2zM297 373h2v1h-2zM346 373h2v1h-2zM298 374h2v1h-2zM347 374h2v1h-2zM300 375h2v1h-2zM349 375h2v1h-2zM302 376h2v1h-2zM351 376h2v1h-2zM304 377h2v1h-2zM353 377h2v1h-2zM306 378h2v1h-2zM355 378h2v1h-2zM308 379h2v1h-2zM357 379h2v1h-2zM310 380h2v1h-2zM359 380h2v1h-2zM312 381h2v1h-2zM361 381h2v1h-2zM311 382h2v1h-2zM360 382h2v1h-2zM309 383h2v1h-2zM358 383h2v1h-2zM307 384h2v1h-2zM356 384h2v1h-2zM305 385h2v1h-2zM354 385h2v1h-2zM303 386h2v1h-2zM352 386h2v1h-2zM301 387h2v1h-2zM350 387h2v1h-2zM299 388h2v1h-2zM348 388h2v1h-2zM297 389h2v1h-2zM346 389h2v1h-2zM298 390h2v1h-2zM347 390h2v1h-2zM300 391h2v1h-2zM349 391h2v1h-2zM302 392h2v1h-2zM351 392h2v1h-2zM304 393h2v1h-2zM353 393h2v1h-2zM305 394h1v1h-1zM354 394h1v1h-1zM305 395h1v1h-1zM354 395h1v1h-1zM305 396h1v1h-1zM354 396h1v1h-1zM305 397h1v1h-1zM354 397h1v1h-1z" fill="#000080" shape-rendering="crispEdges"/>
</g>
<g shape-rendering="crispEdges">
<rect x="48.5" y="506.5" width="826" height="174" fill="none" stroke="#9c9c9c"/>
<line x1="48" y1="663.5" x2="874" y2="663.5" stroke="#8e8e8e" stroke-dasharray="3 3"/>
<line x1="48" y1="645.5" x2="874" y2="645.5" stroke="#8e8e8e" stroke-dasharray="3 3"/>
<line x1="48" y1="628.5" x2="874" y2="628.5" stroke="#8e8e8e" stroke-dasharray="3 3"/>
<line x1="48" y1="610.5" x2="874" y2="610.5" stroke="#8e8e8e" stroke-dasharray="3 3"/>
<line x1="48" y1="593.5" x2="874" y2="593.5" stroke="#8e8e8e" stroke-dasharray="3 3"/>
<line x1="48" y1="576.5" x2="874" y2="576.5" stroke="#8e8e8e" stroke-dasharray="3 3"/>
<line x1="48" y1="558.5" x2="874" y2="558.5" stroke="#8e8e8e" stroke-dasharray="3 3"/>
<line x1="48" y1="541.5" x2="874" y2="541.5" stroke="#8e8e8e" stroke-dasharray="3 3"/>
<line x1="48" y1="523.5" x2="874" y2="523.5" stroke="#8e8e8e" stroke-dasharray="3 3"/>
<line x1="40" y1="680.5" x2="48" y2="680.5" stroke="#9c9c9c"/>
<line x1="40" y1="663.5" x2="48" y2="663.5" stroke="#9c9c9c"/>
<line x1="40" y1="645.5" x2="48" y2="645.5" stroke="#9c9c9c"/>
<line x1="40" y1="628.5" x2="48" y2="628.5" stroke="#9c9c9c"/>
<line x1="40" y1="610.5" x2="48" y2="610.5" stroke="#9c9c9c"/>
<line x1="40" y1="593.5" x2="48" y2="593.5" stroke="#9c9c9c"/>
<line x1="40" y1="576.5" x2="48" y2="576.5" stroke="#9c9c9c"/>
<line x1="40" y1="558.5" x2="48" y2="558.5" stroke="#9c9c9c"/>
<line x1="40" y1="541.5" x2="48" y2="541.5" stroke="#9c9c9c"/>
<line x1="40" y1="523.5" x2="48" y2="523.5" stroke="#9c9c9c"/>
<line x1="40" y1="506.5" x2="48" y2="506.5" stroke="#9c9c9c"/>
<line x1="131.5" y1="510" x2="131.5" y2="680" stroke="#8e8e8e" stroke-dasharray="3 3"/>
<line x1="213.5" y1="510" x2="213.5" y2="680" stroke="#8e8e8e" stroke-dasharray="3 3"/>
<line x1="296.5" y1="510" x2="296.5" y2="680" stroke="#8e8e8e" stroke-dasharray="3 3"/>
<line x1="378.5" y1="510" x2="378.5" y2="680" stroke="#8e8e8e" stroke-dasharray="3 3"/>
<line x1="461.5" y1="510" x2="461.5" y2="680" stroke="#8e8e8e" stroke-dasharray="3 3"/>
<line x1="544.5" y1="510" x2="544.5" y2="680" stroke="#8e8e8e" stroke-dasharray="3 3"/>
<line x1="626.5" y1="510" x2="626.5" y2="680" stroke="#8e8e8e" stroke-dasharray="3 3"/>
<line x1="709.5" y1="510" x2="709.5" y2="680" stroke="#8e8e8e" stroke-dasharray="3 3"/>
<line x1="791.5" y1="510" x2="791.5" y2="680" stroke="#8e8e8e" stroke-dasharray="3 3"/>
<rect x="48.5" y="701.5" width="826" height="178" fill="none" stroke="#9c9c9c"/>
<line x1="48" y1="854.5" x2="874" y2="854.5" stroke="#8e8e8e" stroke-dasharray="3 3"/>
<line x1="48" y1="828.5" x2="874" y2="828.5" stroke="#8e8e8e" stroke-dasharray="3 3"/>
<line x1="48" y1="803.5" x2="874" y2="803.5" stroke="#8e8e8e" stroke-dasharray="3 3"/>
<line x1="48" y1="777.5" x2="874" y2="777.5" stroke="#8e8e8e" stroke-dasharray="3 3"/>
<line x1="48" y1="752.5" x2="874" y2="752.5" stroke="#8e8e8e" stroke-dasharray="3 3"/>
<line x1="48" y1="726.5" x2="874" y2="726.5" stroke="#8e8e8e" stroke-dasharray="3 3"/>
<line x1="40" y1="879.5" x2="48" y2="879.5" stroke="#9c9c9c"/>
<line x1="40" y1="854.5" x2="48" y2="854.5" stroke="#9c9c9c"/>
<line x1="40" y1="828.5" x2="48" y2="828.5" stroke="#9c9c9c"/>
<line x1="40" y1="803.5" x2="48" y2="803.5" stroke="#9c9c9c"/>
<line x1="40" y1="777.5" x2="48" y2="777.5" stroke="#9c9c9c"/>
<line x1="40" y1="752.5" x2="48" y2="752.5" stroke="#9c9c9c"/>
<line x1="40" y1="726.5" x2="48" y2="726.5" stroke="#9c9c9c"/>
<line x1="40" y1="701.5" x2="48" y2="701.5" stroke="#9c9c9c"/>
<line x1="48.5" y1="879" x2="48.5" y2="887" stroke="#9c9c9c"/>
<line x1="131.5" y1="703" x2="131.5" y2="879" stroke="#8e8e8e" stroke-dasharray="3 3"/>
<line x1="131.5" y1="879" x2="131.5" y2="887" stroke="#9c9c9c"/>
<line x1="213.5" y1="703" x2="213.5" y2="879" stroke="#8e8e8e" stroke-dasharray="3 3"/>
<line x1="213.5" y1="879" x2="213.5" y2="887" stroke="#9c9c9c"/>
<line x1="296.5" y1="703" x2="296.5" y2="879" stroke="#8e8e8e" stroke-dasharray="3 3"/>
<line x1="296.5" y1="879" x2="296.5" y2="887" stroke="#9c9c9c"/>
<line x1="378.5" y1="703" x2="378.5" y2="879" stroke="#8e8e8e" stroke-dasharray="3 3"/>
<line x1="378.5" y1="879" x2="378.5" y2="887" stroke="#9c9c9c"/>
<line x1="461.5" y1="703" x2="461.5" y2="879" stroke="#8e8e8e" stroke-dasharray="3 3"/>
<line x1="461.5" y1="879" x2="461.5" y2="887" stroke="#9c9c9c"/>
<line x1="544.5" y1="703" x2="544.5" y2="879" stroke="#8e8e8e" stroke-dasharray="3 3"/>
<line x1="544.5" y1="879" x2="544.5" y2="887" stroke="#9c9c9c"/>
<line x1="626.5" y1="703" x2="626.5" y2="879" stroke="#8e8e8e" stroke-dasharray="3 3"/>
<line x1="626.5" y1="879" x2="626.5" y2="887" stroke="#9c9c9c"/>
<line x1="709.5" y1="703" x2="709.5" y2="879" stroke="#8e8e8e" stroke-dasharray="3 3"/>
<line x1="709.5" y1="879" x2="709.5" y2="887" stroke="#9c9c9c"/>
<line x1="791.5" y1="703" x2="791.5" y2="879" stroke="#8e8e8e" stroke-dasharray="3 3"/>
<line x1="791.5" y1="879" x2="791.5" y2="887" stroke="#9c9c9c"/>
<line x1="874.5" y1="879" x2="874.5" y2="887" stroke="#9c9c9c"/>
</g>
<g font-family="Liberation Sans, sans-serif" font-size="13.2" fill="#c8c8c8" stroke="#c8c8c8" stroke-width="0.12">
<text x="40" y="685" text-anchor="end" textLength="27" lengthAdjust="spacingAndGlyphs">0.0V</text>
<text x="40" y="668" text-anchor="end" textLength="27" lengthAdjust="spacingAndGlyphs">0.5V</text>
<text x="40" y="650" text-anchor="end" textLength="27" lengthAdjust="spacingAndGlyphs">1.0V</text>
<text x="40" y="633" text-anchor="end" textLength="27" lengthAdjust="spacingAndGlyphs">1.5V</text>
<text x="40" y="615" text-anchor="end" textLength="27" lengthAdjust="spacingAndGlyphs">2.0V</text>
<text x="40" y="598" text-anchor="end" textLength="27" lengthAdjust="spacingAndGlyphs">2.5V</text>
<text x="40" y="581" text-anchor="end" textLength="27" lengthAdjust="spacingAndGlyphs">3.0V</text>
<text x="40" y="563" text-anchor="end" textLength="27" lengthAdjust="spacingAndGlyphs">3.5V</text>
<text x="40" y="546" text-anchor="end" textLength="27" lengthAdjust="spacingAndGlyphs">4.0V</text>
<text x="40" y="528" text-anchor="end" textLength="27" lengthAdjust="spacingAndGlyphs">4.5V</text>
<text x="40" y="511" text-anchor="end" textLength="27" lengthAdjust="spacingAndGlyphs">5.0V</text>
<text transform="translate(40,884) scale(1,1.1)" text-anchor="end" textLength="32" lengthAdjust="spacing">-1.0V</text>
<text transform="translate(40,859) scale(1,1.1)" text-anchor="end" textLength="27.3" lengthAdjust="spacing">0.0V</text>
<text transform="translate(40,833) scale(1,1.1)" text-anchor="end" textLength="27.3" lengthAdjust="spacing">1.0V</text>
<text transform="translate(40,808) scale(1,1.1)" text-anchor="end" textLength="27.3" lengthAdjust="spacing">2.0V</text>
<text transform="translate(40,782) scale(1,1.1)" text-anchor="end" textLength="27.3" lengthAdjust="spacing">3.0V</text>
<text transform="translate(40,757) scale(1,1.1)" text-anchor="end" textLength="27.3" lengthAdjust="spacing">4.0V</text>
<text transform="translate(40,731) scale(1,1.1)" text-anchor="end" textLength="27.3" lengthAdjust="spacing">5.0V</text>
<text transform="translate(40,706) scale(1,1.1)" text-anchor="end" textLength="27.3" lengthAdjust="spacing">6.0V</text>
<text transform="translate(48.5,900) scale(1,1.1)" text-anchor="middle" textLength="26.4" lengthAdjust="spacing">0ms</text>
<text transform="translate(131.5,900) scale(1,1.1)" text-anchor="middle" textLength="26.4" lengthAdjust="spacing">8ms</text>
<text transform="translate(213.5,900) scale(1,1.1)" text-anchor="middle" textLength="34" lengthAdjust="spacing">16ms</text>
<text transform="translate(296.5,900) scale(1,1.1)" text-anchor="middle" textLength="34" lengthAdjust="spacing">24ms</text>
<text transform="translate(378.5,900) scale(1,1.1)" text-anchor="middle" textLength="34" lengthAdjust="spacing">32ms</text>
<text transform="translate(461.5,900) scale(1,1.1)" text-anchor="middle" textLength="34" lengthAdjust="spacing">40ms</text>
<text transform="translate(544.5,900) scale(1,1.1)" text-anchor="middle" textLength="34" lengthAdjust="spacing">48ms</text>
<text transform="translate(626.5,900) scale(1,1.1)" text-anchor="middle" textLength="34" lengthAdjust="spacing">56ms</text>
<text transform="translate(709.5,900) scale(1,1.1)" text-anchor="middle" textLength="34" lengthAdjust="spacing">64ms</text>
<text transform="translate(791.5,900) scale(1,1.1)" text-anchor="middle" textLength="34" lengthAdjust="spacing">72ms</text>
<text transform="translate(874.5,900) scale(1,1.1)" text-anchor="middle" textLength="34" lengthAdjust="spacing">80ms</text>
</g>
<g font-family="Liberation Sans, sans-serif" font-size="12.2" font-weight="bold">
<text x="427.5" y="501" fill="#0000ff" textLength="67" lengthAdjust="spacing">V(vcontrol)</text>
<text x="220" y="696" fill="#00ff00" textLength="66.5" lengthAdjust="spacing">V(osc_out)</text>
<text x="643.5" y="696" fill="#ff0000" textLength="47" lengthAdjust="spacing">V(n005)</text>
</g>
<polyline points="48.50,680.50 255.00,506.50 461.50,680.50 668.00,506.50 874.50,680.50" fill="none" stroke="#0000ff" shape-rendering="crispEdges"/>
<defs><clipPath id="pc"><rect x="48" y="701" width="827" height="179"/></clipPath></defs>
<g clip-path="url(#pc)">
<polyline points="48.5,853.5 48.5,726.4 98.5,726.4 98.5,853.5 105.5,853.5 105.5,726.4 115.5,726.4 115.5,853.5 120.5,853.5 120.5,726.4 129.5,726.4 129.5,853.5 134.5,853.5 134.5,726.4 141.5,726.4 141.5,853.5 145.5,853.5 145.5,726.4 152.5,726.4 152.5,853.5 155.5,853.5 155.5,726.4 162.5,726.4 162.5,853.5 165.5,853.5 165.5,726.4 170.5,726.4 170.5,853.5 174.5,853.5 174.5,726.4 178.5,726.4 178.5,853.5 182.5,853.5 182.5,726.4 188.5,726.4 188.5,853.5 190.5,853.5 190.5,726.4 194.5,726.4 194.5,853.5 197.5,853.5 197.5,726.4 201.5,726.4 201.5,853.5 204.5,853.5 204.5,726.4 208.5,726.4 208.5,853.5 211.5,853.5 211.5,726.4 214.5,726.4 214.5,853.5 218.5,853.5 218.5,726.4 221.5,726.4 221.5,853.5 224.5,853.5 224.5,726.4 228.5,726.4 228.5,853.5 231.5,853.5 231.5,726.4 234.5,726.4 234.5,853.5 237.5,853.5 237.5,726.4 240.5,726.4 240.5,853.5 242.5,853.5 242.5,726.4 245.5,726.4 245.5,853.5 248.5,853.5 248.5,726.4 251.5,726.4 251.5,853.5 253.5,853.5 253.5,726.4 257.5,726.4 257.5,853.5 259.5,853.5 259.5,726.4 262.5,726.4 262.5,853.5 265.5,853.5 265.5,726.4 269.5,726.4 269.5,853.5 270.5,853.5 270.5,726.4 274.5,726.4 274.5,853.5 276.5,853.5 276.5,726.4 280.5,726.4 280.5,853.5 282.5,853.5 282.5,726.4 286.5,726.4 286.5,853.5 289.5,853.5 289.5,726.4 292.5,726.4 292.5,853.5 295.5,853.5 295.5,726.4 299.5,726.4 299.5,853.5 302.5,853.5 302.5,726.4 306.5,726.4 306.5,853.5 309.5,853.5 309.5,726.4 314.5,726.4 314.5,853.5 316.5,853.5 316.5,726.4 321.5,726.4 321.5,853.5 323.5,853.5 323.5,726.4 328.5,726.4 328.5,853.5 332.5,853.5 332.5,726.4 336.5,726.4 336.5,853.5 340.5,853.5 340.5,726.4 345.5,726.4 345.5,853.5 348.5,853.5 348.5,726.4 355.5,726.4 355.5,853.5 359.5,853.5 359.5,726.4 365.5,726.4 365.5,853.5 370.5,853.5 370.5,726.4 377.5,726.4 377.5,853.5 382.5,853.5 382.5,726.4 390.5,726.4 390.5,853.5 396.5,853.5 396.5,726.4 407.5,726.4 407.5,853.5 413.5,853.5 413.5,726.4 430.5,726.4 430.5,853.5 439.5,853.5 439.5,726.4 486.5,726.4 486.5,853.5 495.5,853.5 495.5,726.4 511.5,726.4 511.5,853.5 517.5,853.5 517.5,726.4 527.5,726.4 527.5,853.5 533.5,853.5 533.5,726.4 541.5,726.4 541.5,853.5 546.5,853.5 546.5,726.4 553.5,726.4 553.5,853.5 558.5,853.5 558.5,726.4 564.5,726.4 564.5,853.5 568.5,853.5 568.5,726.4 574.5,726.4 574.5,853.5 578.5,853.5 578.5,726.4 583.5,726.4 583.5,853.5 587.5,853.5 587.5,726.4 591.5,726.4 591.5,853.5 595.5,853.5 595.5,726.4 600.5,726.4 600.5,853.5 603.5,853.5 603.5,726.4 607.5,726.4 607.5,853.5 610.5,853.5 610.5,726.4 614.5,726.4 614.5,853.5 617.5,853.5 617.5,726.4 621.5,726.4 621.5,853.5 624.5,853.5 624.5,726.4 628.5,726.4 628.5,853.5 631.5,853.5 631.5,726.4 635.5,726.4 635.5,853.5 637.5,853.5 637.5,726.4 641.5,726.4 641.5,853.5 643.5,853.5 643.5,726.4 647.5,726.4 647.5,853.5 649.5,853.5 649.5,726.4 652.5,726.4 652.5,853.5 655.5,853.5 655.5,726.4 658.5,726.4 658.5,853.5 661.5,853.5 661.5,726.4 664.5,726.4 664.5,853.5 666.5,853.5 666.5,726.4 669.5,726.4 669.5,853.5 672.5,853.5 672.5,726.4 675.5,726.4 675.5,853.5 677.5,853.5 677.5,726.4 680.5,726.4 680.5,853.5 682.5,853.5 682.5,726.4 686.5,726.4 686.5,853.5 689.5,853.5 689.5,726.4 692.5,726.4 692.5,853.5 695.5,853.5 695.5,726.4 698.5,726.4 698.5,853.5 700.5,853.5 700.5,726.4 705.5,726.4 705.5,853.5 708.5,853.5 708.5,726.4 711.5,726.4 711.5,853.5 714.5,853.5 714.5,726.4 717.5,726.4 717.5,853.5 721.5,853.5 721.5,726.4 725.5,726.4 725.5,853.5 729.5,853.5 729.5,726.4 734.5,726.4 734.5,853.5 736.5,853.5 736.5,726.4 741.5,726.4 741.5,853.5 744.5,853.5 744.5,726.4 749.5,726.4 749.5,853.5 753.5,853.5 753.5,726.4 758.5,726.4 758.5,853.5 762.5,853.5 762.5,726.4 768.5,726.4 768.5,853.5 772.5,853.5 772.5,726.4 779.5,726.4 779.5,853.5 783.5,853.5 783.5,726.4 790.5,726.4 790.5,853.5 795.5,853.5 795.5,726.4 803.5,726.4 803.5,853.5 809.5,853.5 809.5,726.4 819.5,726.4 819.5,853.5 826.5,853.5 826.5,726.4 842.5,726.4 842.5,853.5 851.5,853.5 851.5,726.4 874.5,726.4" fill="none" stroke="#00ff00" shape-rendering="crispEdges"/>
<polyline points="48.5,853.5 53.9,849.9 58.2,847.1 67.0,838.0 74.7,826.8 80.1,816.1 85.6,804.9 91.1,794.0 94.4,782.0 98.5,768.7 105.3,812.1 106.9,805.4 108.6,798.5 110.2,791.4 111.8,784.0 113.5,776.5 115.1,768.8 120.7,812.1 122.5,803.9 124.3,795.5 126.0,786.9 127.8,778.0 129.6,768.8 134.6,812.1 136.2,801.5 137.9,790.7 139.5,779.8 141.2,768.8 145.0,812.1 146.8,801.4 148.7,790.7 150.5,779.8 152.3,768.8 155.2,812.1 156.9,801.5 158.6,790.8 160.3,779.9 162.0,768.8 165.2,812.1 167.1,797.9 168.9,783.5 170.8,768.8 174.3,812.1 176.4,790.6 178.5,768.8 182.0,812.1 183.5,801.4 185.0,790.7 186.5,779.8 188.0,768.8 190.5,812.1 192.7,790.6 194.8,768.8 197.4,812.1 199.3,790.5 201.2,768.8 204.2,812.1 206.1,790.5 208.0,768.8 211.2,812.1 213.0,790.5 214.8,768.8 218.0,812.1 219.9,790.5 221.8,768.8 224.5,812.1 226.4,790.5 228.2,768.8 231.0,812.1 232.8,790.5 234.5,768.8 237.0,812.1 238.6,790.5 240.2,768.8 242.2,812.1 244.0,790.5 245.8,768.8 248.0,812.1 249.9,790.5 251.8,768.8 253.5,812.1 255.2,790.4 257.0,768.8 259.2,812.1 261.0,790.4 262.8,768.8 265.2,812.1 267.1,790.4 269.0,768.8 270.8,812.1 272.5,790.4 274.2,768.8 276.2,812.1 278.1,790.4 280.0,768.8 282.5,812.1 284.4,790.4 286.2,768.8 289.3,812.1 291.0,790.4 292.6,768.8 295.7,812.1 297.6,790.3 299.6,768.8 302.0,812.1 303.5,797.5 305.0,783.1 306.5,768.8 309.3,812.1 310.9,797.5 312.4,783.1 314.0,768.8 316.2,812.1 318.0,797.4 319.9,783.0 321.7,768.8 323.2,812.1 324.9,797.5 326.5,783.1 328.2,768.8 332.3,812.1 334.5,790.3 336.7,768.8 340.0,812.1 341.7,797.4 343.3,783.0 345.0,768.8 348.9,812.1 350.6,801.0 352.4,790.1 354.1,779.4 355.8,768.8 359.2,812.1 360.7,801.1 362.2,790.2 363.8,779.5 365.3,768.8 370.3,812.1 372.1,800.9 374.0,789.9 375.8,779.2 377.6,768.8 382.5,812.1 384.1,802.9 385.7,794.1 387.4,785.4 389.0,777.0 390.6,768.8 396.8,812.1 398.3,805.3 399.9,798.6 401.4,792.1 403.0,785.9 404.5,780.0 406.1,774.3 407.6,768.8 413.6,812.1 415.1,807.4 416.6,803.0 418.2,798.6 419.7,794.4 421.2,790.4 422.7,786.5 424.2,782.7 425.7,779.1 427.3,775.5 428.8,772.1 430.3,768.8 439.3,812.1 440.8,809.8 442.3,807.8 443.9,805.9 445.4,804.2 446.9,802.6 448.4,801.2 449.9,799.9 451.5,798.6 453.0,797.5 454.5,796.6 456.0,795.7 457.5,794.9 459.1,794.2 460.6,793.5 462.1,792.9 463.6,792.2 465.1,791.4 466.6,790.6 468.2,789.7 469.7,788.7 471.2,787.5 472.7,786.2 474.2,784.8 475.8,783.4 477.3,781.7 478.8,780.0 480.3,778.0 481.8,775.9 483.4,773.6 484.9,771.2 486.4,768.8 495.6,812.1 497.2,808.4 498.8,804.6 500.4,800.7 502.0,796.6 503.6,792.3 505.3,788.0 506.9,783.4 508.5,778.7 510.1,773.9 511.7,768.8 517.5,812.1 519.2,805.5 520.9,798.6 522.6,791.5 524.4,784.1 526.1,776.6 527.8,768.8 533.6,812.1 535.2,803.9 536.8,795.4 538.4,786.8 540.0,777.9 541.6,768.8 546.7,812.1 548.3,801.5 549.9,790.8 551.5,779.9 553.1,768.8 558.3,812.1 559.8,801.4 561.3,790.7 562.9,779.8 564.4,768.8 568.3,812.1 569.8,801.5 571.3,790.7 572.9,779.8 574.4,768.8 578.3,812.1 580.2,797.9 582.0,783.5 583.9,768.8 587.2,812.1 588.7,797.8 590.2,783.4 591.7,768.8 595.3,812.1 596.9,797.8 598.4,783.4 600.0,768.8 603.3,812.1 605.4,790.6 607.5,768.8 610.0,812.1 612.1,790.5 614.2,768.8 617.2,812.1 619.3,790.5 621.4,768.8 624.4,812.1 625.9,797.7 627.4,783.3 628.9,768.8 631.1,812.1 632.6,797.7 634.1,783.3 635.6,768.8 637.2,812.1 639.3,790.5 641.4,768.8 643.3,812.1 645.2,790.5 647.2,768.8 649.1,812.1 650.7,790.5 652.2,768.8 655.3,812.1 656.8,790.5 658.3,768.8 661.1,812.1 662.8,790.5 664.4,768.8 666.1,812.1 667.8,790.4 669.4,768.8 672.2,812.1 674.0,790.4 675.8,768.8 677.2,812.1 678.9,790.4 680.6,768.8 682.8,812.1 684.6,790.4 686.4,768.8 689.3,812.1 690.8,790.4 692.4,768.8 695.1,812.1 696.8,790.4 698.4,768.8 700.9,812.1 703.1,790.4 705.3,768.8 708.2,812.1 709.9,790.4 711.6,768.8 714.2,812.1 715.9,790.3 717.6,768.8 721.2,812.1 723.4,790.3 725.5,768.8 729.3,812.1 730.9,797.5 732.4,783.1 734.0,768.8 736.3,812.1 738.1,797.5 739.9,783.0 741.7,768.8 744.3,812.1 746.0,797.5 747.6,783.1 749.3,768.8 753.3,812.1 755.0,797.4 756.6,783.0 758.3,768.8 762.3,812.1 764.2,797.4 766.1,783.0 768.0,768.8 772.3,812.1 774.0,801.1 775.6,790.2 777.3,779.5 779.0,768.8 783.1,812.1 784.6,803.1 786.2,794.2 787.7,785.5 789.3,777.1 790.8,768.8 795.0,812.1 796.8,802.9 798.6,794.0 800.3,785.4 802.1,777.0 803.9,768.8 809.4,812.1 811.1,804.2 812.8,796.5 814.5,789.1 816.3,782.0 818.0,775.3 819.7,768.8 826.1,812.1 827.6,807.4 829.1,803.0 830.7,798.6 832.2,794.5 833.7,790.4 835.2,786.5 836.7,782.7 838.2,779.1 839.8,775.5 841.3,772.1 842.8,768.8 851.1,812.1 852.7,810.3 854.2,808.7 855.8,807.2 857.3,805.8 858.9,804.6 860.5,803.4 862.0,802.4 863.6,801.4 865.1,800.5 866.7,799.7 868.3,799.0 869.8,798.4 871.4,797.8 872.9,797.3 874.5,796.8" fill="none" stroke="#ff0000" shape-rendering="crispEdges"/>
</g>
</svg></body></html>
